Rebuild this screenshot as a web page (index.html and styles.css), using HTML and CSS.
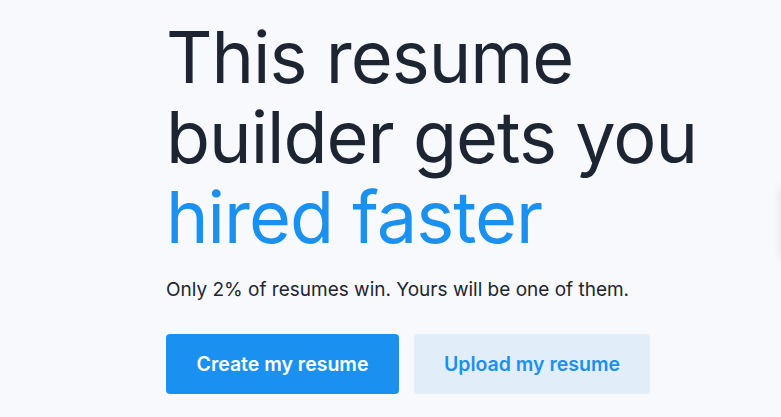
FILE: index.html
```html
<!DOCTYPE html>
<html lang="en">
<head>
    <meta charset="UTF-8">
    <meta name="viewport" content="width=device-width, initial-scale=1.0">
    <title>Resume Builder</title>
    <link rel="stylesheet" href="styles.css">
</head>
<body>
    <section class="hero">
        <h1 class="hero-title">This resume builder gets you <span class="accent">hired faster</span></h1>
        <p class="hero-subtitle">Only 2% of resumes win. Yours will be one of them.</p>
        <div class="hero-actions">
            <a href="#" class="btn btn-primary">Create my resume</a>
            <a href="#" class="btn btn-secondary">Upload my resume</a>
        </div>
    </section>
    <div class="side-card"></div>
</body>
</html>
```

FILE: styles.css
```css
body {
    margin: 0;
    background-color: #f7f9fc;
    font-family: Inter, 'Liberation Sans', sans-serif;
    color: #1e2532;
    overflow: hidden;
}

.hero {
    padding: 17px 0 0 166px;
    max-width: 560px;
}

.hero-title {
    margin: 0;
    font-size: 72px;
    line-height: 80px;
    font-weight: 400;
    letter-spacing: -1px;
}

.accent {
    color: #1a91f0;
}

.hero-subtitle {
    margin: 21px 0 0;
    font-size: 19px;
    line-height: 24px;
}

.hero-actions {
    display: flex;
    gap: 15px;
    margin-top: 32px;
}

.btn {
    display: flex;
    align-items: center;
    justify-content: center;
    height: 60px;
    border-radius: 4px;
    font-size: 19.5px;
    font-weight: 600;
    text-decoration: none;
}

.btn-primary {
    width: 233px;
    background-color: #1a91f0;
    color: #fff;
}

.btn-secondary {
    width: 236px;
    background-color: #e1eefa;
    color: #1a91f0;
}

.side-card {
    position: absolute;
    top: 185px;
    right: -20px;
    width: 20px;
    height: 70px;
    box-shadow: 0 2px 10px rgba(30, 37, 50, 0.12);
}
```
